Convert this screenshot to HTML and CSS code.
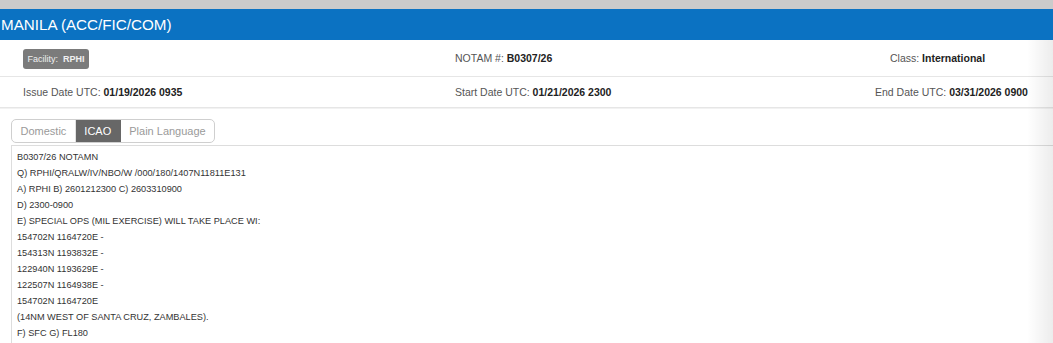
FILE: index.html
```html
<!DOCTYPE html>
<html>
<head>
<meta charset="utf-8">
<link rel="stylesheet" href="styles.css">
</head>
<body>
<div class="page">
  <div class="topbar"></div>
  <div class="header">MANILA (ACC/FIC/COM)</div>
  <div class="info-row row-first">
    <div class="cell"><span class="badge">Facility:&nbsp; <b>RPHI</b></span></div>
    <div class="cell"><span class="lbl">NOTAM #:</span> <b class="val">B0307/26</b></div>
    <div class="cell cell-class"><span class="lbl">Class:</span> <b class="val">International</b></div>
  </div>
  <div class="info-row row-second">
    <div class="cell"><span class="lbl">Issue Date UTC:</span> <b class="val">01/19/2026 0935</b></div>
    <div class="cell"><span class="lbl">Start Date UTC:</span> <b class="val">01/21/2026 2300</b></div>
    <div class="cell cell-end"><span class="lbl">End Date UTC:</span> <b class="val">03/31/2026 0900</b></div>
  </div>
  <div class="tabs">
    <span class="tab">Domestic</span><span class="tab active">ICAO</span><span class="tab">Plain Language</span>
  </div>
  <pre class="notam">B0307/26 NOTAMN
Q) RPHI/QRALW/IV/NBO/W /000/180/1407N11811E131
A) RPHI B) 2601212300 C) 2603310900
D) 2300-0900
E) SPECIAL OPS (MIL EXERCISE) WILL TAKE PLACE WI:
154702N 1164720E -
154313N 1193832E -
122940N 1193629E -
122507N 1164938E -
154702N 1164720E
(14NM WEST OF SANTA CRUZ, ZAMBALES).
F) SFC G) FL180</pre>
  <div class="edge-shade"></div>
</div>
</body>
</html>
```

FILE: styles.css
```css
html, body {
  margin: 0;
  padding: 0;
  background: #ffffff;
}
body {
  font-family: "Liberation Sans", Arial, sans-serif;
  color: #333;
  overflow: hidden;
}
.page {
  position: relative;
  width: 1053px;
  height: 343px;
  overflow: hidden;
}
.topbar {
  height: 9px;
  background: #cbcbcb;
}
.header {
  height: 31px;
  line-height: 31px;
  background: #0b72c2;
  color: #ffffff;
  font-size: 15.2px;
  padding-left: 1px;
  white-space: nowrap;
}
.info-row {
  display: grid;
  grid-template-columns: 432px 432px 1fr;
  align-items: center;
  padding-left: 23px;
  border-bottom: 1px solid #e6e6e6;
  font-size: 10.5px;
  white-space: nowrap;
}
.row-first {
  height: 36px;
}
.row-second {
  height: 30px;
  box-shadow: 0 1px 0 #f2f2f2;
}
.lbl {
  color: #555;
}
.val {
  color: #222;
  font-weight: bold;
}
.cell-class {
  padding-left: 3px;
}
.cell-end {
  margin-left: -12px;
}
.badge {
  display: inline-block;
  background: #7b7b7b;
  color: #f0f0f0;
  font-size: 9px;
  height: 20px;
  line-height: 20px;
  padding: 0 4.5px;
  border-radius: 3px;
  margin-top: 1px;
}
.badge b {
  font-weight: bold;
}
.tabs {
  display: flex;
  margin: 11px 0 0 11px;
  width: max-content;
  border: 1px solid #cfcfcf;
  border-radius: 5px;
  overflow: hidden;
  height: 24px;
  box-sizing: border-box;
}
.tab {
  display: block;
  font-size: 11px;
  line-height: 22px;
  padding: 0 8.5px;
  color: #9a9a9a;
  border-right: 1px solid #e2e2e2;
}
.tab:last-child {
  border-right: none;
}
.tab.active {
  background: #676767;
  color: #ffffff;
  border-right-color: #676767;
}
.notam {
  margin: 2px 0 0 11px;
  border: 1px solid #dddddd;
  border-right: none;
  border-bottom: none;
  padding: 3px 5px 0 5px;
  font-family: "Liberation Sans", Arial, sans-serif;
  font-size: 9.2px;
  line-height: 16px;
  color: #333;
  height: 200px;
  background: #ffffff;
}
.edge-shade {
  position: absolute;
  top: 40px;
  right: 0;
  bottom: 0;
  width: 26px;
  background: linear-gradient(to right, rgba(0,0,0,0), rgba(0,0,0,0.075));
  pointer-events: none;
}
```
